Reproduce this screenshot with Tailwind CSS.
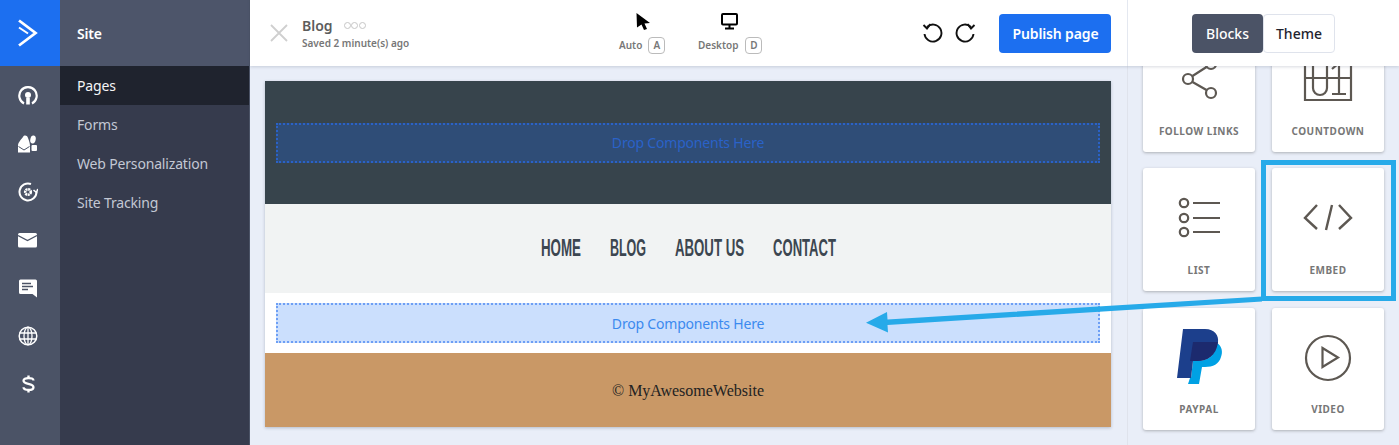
<!DOCTYPE html>
<html lang="en">
<head>
    <meta charset="UTF-8">
    <title>Site builder</title>
    <script src="https://cdn.jsdelivr.net/npm/@tailwindcss/browser@4"></script>
</head>
<body class="bg-[#e9eef8]">
    <div class="relative flex h-[445px] w-[1399px] overflow-hidden font-['Noto_Sans',sans-serif]">
        <!-- icon rail -->
        <div class="flex w-[60px] shrink-0 flex-col bg-[#4b5366]">
            <div class="flex h-[66px] items-center justify-center bg-[#1c6ff0] pr-[4px]">
                <svg width="20" height="28" viewBox="0 0 20 28" fill="none" stroke="#fff" stroke-width="2.8"><path d="M1 1.500 L17.500 14 L1 26.500"/><path d="M1 8.500 L10 14.500" stroke-width="2"/></svg>
            </div>
            <div class="flex flex-col items-center pt-[6px] pr-[4px] text-white">
                <div class="flex h-[48px] items-center justify-center">
                    <svg width="20" height="20" viewBox="0 0 20 20" fill="none" stroke="#fff" stroke-width="2.2"><path d="M6 17.500 A8.700 8.700 0 1 1 14 17.500"/><circle cx="10" cy="9" r="3" fill="#fff" stroke="none"/><rect x="8.200" y="12" width="3.600" height="6.500" fill="#fff" stroke="none"/></svg>
                </div>
                <div class="flex h-[48px] items-center justify-center">
                    <svg width="20" height="18" viewBox="0 0 20 18" fill="#fff"><path d="M0 17.500 V11 C0 7 3 5 5 2 C6 0 9 0 10 3 C11 6 12 8 12 11 V17.500 Z"/><path d="M0.500 11.500 L6 15 L11.500 11.500" stroke="#4b5366" stroke-width="1" fill="none"/><ellipse cx="15" cy="4.500" rx="2.700" ry="4" transform="rotate(12 15 4.500)"/><rect x="13.500" y="10" width="5.500" height="6" rx="1"/></svg>
                </div>
                <div class="flex h-[48px] items-center justify-center">
                    <svg width="20" height="20" viewBox="0 0 20 20" fill="none" stroke="#fff" stroke-width="2"><path d="M13 2 A8.500 8.500 0 1 0 18.500 10"/><path d="M15.500 8 L18.500 10.500 L19.800 7" stroke-width="1.600"/><circle cx="10" cy="10" r="2.800" stroke-width="2.600" stroke-dasharray="2 0.600"/></svg>
                </div>
                <div class="flex h-[48px] items-center justify-center">
                    <svg width="20" height="15" viewBox="0 0 20 15"><rect width="19" height="14.500" x="0" y="0" rx="1.500" fill="#fff"/><path d="M0 2.500 L9.500 7.500 L19 2.500" fill="none" stroke="#4b5366" stroke-width="1.400"/></svg>
                </div>
                <div class="flex h-[48px] items-center justify-center">
                    <svg width="19" height="19" viewBox="0 0 19 19"><path d="M1.500 0.500 H16.500 A1.500 1.500 0 0 1 18 2 V18.500 L13.500 15 H1.500 A1.500 1.500 0 0 1 0 13.500 V2 A1.500 1.500 0 0 1 1.500 0.500 Z" fill="#fff"/><path d="M3 4.500 H12 M3 7.500 H14 M3 10.500 H9" stroke="#4b5366" stroke-width="1.500"/></svg>
                </div>
                <div class="flex h-[48px] items-center justify-center">
                    <svg width="20" height="20" viewBox="0 0 20 20" fill="none" stroke="#fff" stroke-width="1.300"><circle cx="10" cy="10" r="8.800" stroke-width="1.500"/><ellipse cx="10" cy="10" rx="4" ry="8.800"/><path d="M10 1 V19 M1.500 7 H18.500 M1.500 13 H18.500"/></svg>
                </div>
                <div class="flex h-[48px] items-center justify-center">
                    <svg width="13" height="18" viewBox="0 0 14 20" fill="none" stroke="#fff" stroke-width="2.600"><path d="M12.500 6 C12.500 4 10 3.500 7 3.500 C3.500 3.500 1.500 4.500 1.500 6.500 C1.500 11 12.500 8.500 12.500 13.500 C12.500 15.500 10.500 16.500 7 16.500 C3.500 16.500 1.500 15.500 1.500 13.500"/><path d="M7 0.500 V3.500 M7 16.500 V19.500"/></svg>
                </div>
            </div>
        </div>

        <!-- site menu -->
        <div class="flex w-[190px] shrink-0 flex-col border-r border-[#4b5366] bg-[#363b4d] text-[14px] tracking-[-0.012em]">
            <div class="flex h-[66px] items-center bg-[#4d556a] pl-[17px] font-semibold text-white">Site</div>
            <div class="flex h-[39px] items-center bg-[#1f232e] pl-[17px] text-[#f4f5f7]">Pages</div>
            <div class="flex h-[39px] items-center pl-[17px] text-[#c3c8d4]">Forms</div>
            <div class="flex h-[39px] items-center pl-[17px] text-[#c3c8d4]">Web Personalization</div>
            <div class="flex h-[39px] items-center pl-[17px] text-[#c3c8d4]">Site Tracking</div>
        </div>

        <div class="flex min-w-0 flex-1 flex-col">
            <!-- top bar -->
            <div class="z-10 flex h-[66px] shrink-0 bg-white shadow-[0_1px_3px_rgba(60,70,100,0.2)]">
                <div class="flex w-[877px] shrink-0 items-center">
                    <svg class="ml-[19px]" width="20" height="20" viewBox="0 0 20 20" stroke="#cfcfcf" stroke-width="1.800"><path d="M2 2 L18 18 M18 2 L2 18"/></svg>
                    <div class="ml-[13px] w-[120px]">
                        <div class="flex items-center gap-[11px] text-[14px] leading-[18px] font-semibold text-[#5c5c5c]">
                            Blog
                            <span class="flex gap-[0.5px]">
                                <span class="size-[7px] rounded-full border-[1.500px] border-[#c6c6c6]"></span>
                                <span class="size-[7px] rounded-full border-[1.500px] border-[#c6c6c6]"></span>
                                <span class="size-[7px] rounded-full border-[1.500px] border-[#c6c6c6]"></span>
                            </span>
                        </div>
                        <div class="mt-[1px] text-[10px] leading-[14px] font-semibold whitespace-nowrap text-[#777]">Saved 2 minute(s) ago</div>
                    </div>
                    <div class="ml-[197px] flex w-[47px] flex-col items-start">
                        <svg class="mb-[7px] ml-[17px]" width="15" height="17" viewBox="0 0 15 17"><path d="M0.500 0 L14 10 L8.500 10.500 L11 16 L8 17 L5.500 11.500 L1 14.500 Z"/></svg>
                        <div class="flex items-center gap-[6px] text-[10px] font-semibold text-[#777]">
                            Auto
                            <span class="flex h-[17px] w-[17px] shrink-0 items-center justify-center rounded-[4px] border border-[#bbb] text-[#777]">A</span>
                        </div>
                    </div>
                    <div class="ml-[32px] flex flex-col items-start">
                        <svg class="mb-[7px] ml-[23px]" width="17" height="17" viewBox="0 0 17 17" fill="none" stroke="#000" stroke-width="2"><rect x="1" y="1" width="15" height="10.500" rx="1"/><path d="M8.500 12 V15 M4 15.500 H13"/></svg>
                        <div class="flex items-center gap-[7px] text-[10px] font-semibold text-[#777]">
                            Desktop
                            <span class="flex h-[17px] w-[17px] shrink-0 items-center justify-center rounded-[4px] border border-[#bbb] text-[#777]">D</span>
                        </div>
                    </div>
                    <svg class="ml-[160px]" width="21" height="21" viewBox="0 0 21 21" fill="none" stroke="#111" stroke-width="1.900"><path d="M5 4 A8.500 8.500 0 1 1 2.500 11"/><path d="M1.500 2 L5 5.500 L8.500 1"/></svg>
                    <svg class="ml-[12px]" width="21" height="21" viewBox="0 0 21 21" fill="none" stroke="#111" stroke-width="1.900"><path d="M16 4 A8.500 8.500 0 1 0 18.500 11"/><path d="M19.500 2 L16 5.500 L12.500 1"/></svg>
                    <button class="ml-[23px] h-[39px] w-[112px] rounded-[4px] bg-[#1c6ff0] text-[14px] font-semibold tracking-[-0.01em] text-white">Publish page</button>
                </div>
                <div class="flex flex-1 items-center border-l border-[#e4e8f0] pl-[64px]">
                    <button class="h-[39px] w-[71px] rounded-[4px] bg-[#4b5366] text-[14px] font-medium text-white">Blocks</button>
                    <button class="h-[39px] w-[72px] rounded-[4px] border border-[#dfe3ec] bg-white text-[14px] font-medium text-[#1f232e]">Theme</button>
                </div>
            </div>

            <div class="flex min-h-0 flex-1">
                <!-- page canvas -->
                <div class="w-[877px] shrink-0 pt-[15px] pl-[15px]">
                    <div class="w-[846px] shadow-[0_1px_3px_rgba(60,70,100,0.3)]">
                        <div class="flex h-[123px] items-center bg-[#37444c] px-[11px]">
                            <div class="flex h-[40px] w-full items-center justify-center border-2 border-dotted border-[#2a62c8] bg-[#2f4d77] text-[14px] tracking-[-0.014em] text-[#2a62c8]">Drop Components Here</div>
                        </div>
                        <div class="flex h-[89px] items-center justify-center gap-[29px] bg-[#f1f3f3] font-['Liberation_Sans',sans-serif] text-[23px] font-bold whitespace-nowrap text-[#3c4650]">
                            <span class="flex w-[40px] scale-x-[0.58] justify-center">HOME</span>
                            <span class="flex w-[36px] scale-x-[0.545] justify-center">BLOG</span>
                            <span class="flex w-[69px] scale-x-[0.575] justify-center">ABOUT US</span>
                            <span class="flex w-[63px] scale-x-[0.568] justify-center">CONTACT</span>
                        </div>
                        <div class="flex h-[60px] items-center bg-white px-[11px]">
                            <div class="flex h-[40px] w-full items-center justify-center border-2 border-dotted border-[#6d9ff5] bg-[#cbdffd] text-[14px] tracking-[-0.014em] text-[#3b8aef]">Drop Components Here</div>
                        </div>
                        <div class="flex h-[74px] items-center justify-center bg-[#c99866] pt-[2px] font-['Liberation_Serif',serif] text-[16px] text-[#222]">© MyAwesomeWebsite</div>
                    </div>
                </div>

                <!-- blocks panel -->
                <div class="flex-1 overflow-hidden border-l border-[#dfe3ec]">
                    <div class="mt-[-37px] grid grid-cols-[112px_112px] gap-x-[17px] gap-y-[16px] pl-[15px] text-center text-[10px] leading-[12px] font-bold tracking-[0.05em] text-[#777]">
                        <div class="h-[123px] rounded-[3px] bg-white shadow-[0_1px_3px_rgba(60,60,60,0.35)]">
                            <div class="flex h-[96px] items-center justify-center pt-[4px]">
                                <svg width="60" height="60" viewBox="0 0 60 60" fill="none" stroke="#5d5852" stroke-width="2.200"><circle cx="19" cy="30" r="5"/><circle cx="42" cy="44" r="5"/><circle cx="42" cy="15" r="5"/><path d="M23.500 27 L37.500 18 M23.500 33 L37.500 41"/></svg>
                            </div>
                            FOLLOW LINKS
                        </div>
                        <div class="h-[123px] rounded-[3px] bg-white shadow-[0_1px_3px_rgba(60,60,60,0.35)]">
                            <div class="flex h-[96px] items-center justify-center pt-[4px]">
                                <svg width="60" height="60" viewBox="0 0 60 60" fill="none" stroke="#5d5852" stroke-width="2.200"><path d="M7 2 V51 H53 V2 M7 29 H53"/><rect x="15" y="6" width="14" height="40" rx="7"/><path d="M34 20 L41 14 V45 M34 45 H48"/></svg>
                            </div>
                            COUNTDOWN
                        </div>
                        <div class="h-[123px] rounded-[3px] bg-white shadow-[0_1px_3px_rgba(60,60,60,0.35)]">
                            <div class="flex h-[96px] items-center justify-center pt-[4px]">
                                <svg width="60" height="60" viewBox="0 0 60 60" fill="none" stroke="#5d5852" stroke-width="2.200"><circle cx="15" cy="15" r="4.200"/><circle cx="15" cy="30" r="4.200"/><circle cx="15" cy="44" r="4.200"/><path d="M24 15 H51 M24 30 H51 M24 44 H51"/></svg>
                            </div>
                            LIST
                        </div>
                        <div class="h-[123px] rounded-[3px] bg-white shadow-[0_1px_3px_rgba(60,60,60,0.35)]">
                            <div class="flex h-[96px] items-center justify-center pt-[4px]">
                                <svg width="60" height="60" viewBox="0 0 60 60" fill="none" stroke="#5d5852" stroke-width="2.400"><path d="M19 17 L7 30 L19 41 M41 17 L53 30 L41 41 M34 17 L28 42"/></svg>
                            </div>
                            EMBED
                        </div>
                        <div class="mt-[1px] h-[122px] rounded-[3px] bg-white shadow-[0_1px_3px_rgba(60,60,60,0.35)]">
                            <div class="flex h-[95px] items-center justify-center pt-[4px]">
                                <svg width="60" height="60" viewBox="0 0 60 60"><path d="M48 15 C53 18 54 24 52 29 C50 36 44 39 36 39 H33 L30 56 H19 L21 50 H22 L24 33 H28 C38 33 47 28 48 15 Z" fill="#00a1e4"/><path d="M14 1 H36 C46 1 50 8 49 14 C47 28 38 33 28 33 H24 L22 50 H8 Z" fill="#1c3f8c"/><path d="M24 14 H49 C47 28 38 33 28 33 H21 Z" fill="#1c2a6e"/></svg>
                            </div>
                            PAYPAL
                        </div>
                        <div class="mt-[1px] h-[122px] rounded-[3px] bg-white shadow-[0_1px_3px_rgba(60,60,60,0.35)]">
                            <div class="flex h-[95px] items-center justify-center pt-[4px]">
                                <svg width="60" height="60" viewBox="0 0 60 60" fill="none" stroke="#5d5852" stroke-width="2.200"><circle cx="30" cy="30" r="22"/><path d="M24.500 20 L40 29.500 L24.500 39 Z"/></svg>
                            </div>
                            VIDEO
                        </div>
                    </div>
                </div>
            </div>
        </div>

        <!-- annotation over the screenshot -->
        <div class="pointer-events-none absolute top-[160px] left-[1261px] h-[141px] w-[135px] border-[5px] border-[#27aae9]"></div>
        <svg class="pointer-events-none absolute top-0 left-0" width="1399" height="445" fill="#27aae9"><path d="M866 322.700 L887 312 L887.500 319.500 L1262 296.500 L1262 301.500 L887.500 325 L888 332.500 Z"/></svg>
    </div>
</body>
</html>
